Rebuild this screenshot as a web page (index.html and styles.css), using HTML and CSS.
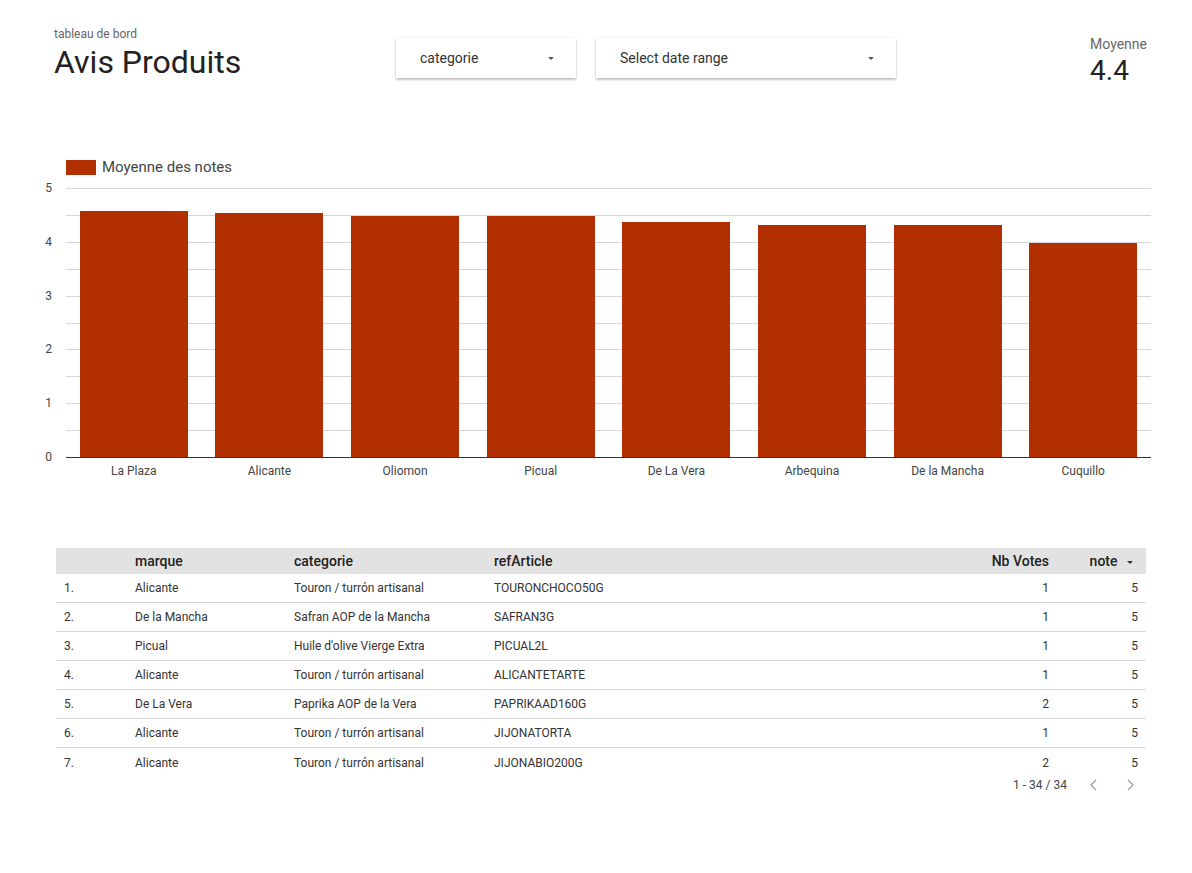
FILE: index.html
```html
<!DOCTYPE html>
<html lang="fr">
<head>
<meta charset="utf-8">
<title>Avis Produits</title>
<link rel="stylesheet" href="styles.css">
</head>
<body>
<div class="page">
  <header class="top">
    <div class="title-block">
      <div class="subtitle">tableau de bord</div>
      <h1 class="title">Avis Produits</h1>
    </div>
    <div class="dropdown dd-cat">
      <span>categorie</span>
      <span class="caret"></span>
    </div>
    <div class="dropdown dd-date">
      <span>Select date range</span>
      <span class="caret"></span>
    </div>
    <div class="scorecard">
      <div class="sc-label">Moyenne</div>
      <div class="sc-value">4.4</div>
    </div>
  </header>

  <section class="chart">
    <div class="legend">
      <span class="swatch"></span>
      <span>Moyenne des notes</span>
    </div>
    <div class="chart-body">
      <div class="yaxis">
        <span>5</span><span>4</span><span>3</span><span>2</span><span>1</span><span>0</span>
      </div>
      <div class="plot-col">
        <div class="plot">
          <div class="grid">
            <div></div><div></div><div></div><div></div><div></div>
            <div></div><div></div><div></div><div></div><div></div>
          </div>
          <div class="bars">
            <div class="slot"><div class="bar" style="height:91.4%"></div></div>
            <div class="slot"><div class="bar" style="height:90.7%"></div></div>
            <div class="slot"><div class="bar" style="height:89.6%"></div></div>
            <div class="slot"><div class="bar" style="height:89.6%"></div></div>
            <div class="slot"><div class="bar" style="height:87.4%"></div></div>
            <div class="slot"><div class="bar" style="height:86.2%"></div></div>
            <div class="slot"><div class="bar" style="height:86.2%"></div></div>
            <div class="slot"><div class="bar" style="height:79.6%"></div></div>
          </div>
        </div>
        <div class="xaxis">
          <span>La Plaza</span><span>Alicante</span><span>Oliomon</span><span>Picual</span>
          <span>De La Vera</span><span>Arbequina</span><span>De la Mancha</span><span>Cuquillo</span>
        </div>
      </div>
    </div>
  </section>

  <section class="table">
    <div class="row head">
      <div></div>
      <div>marque</div>
      <div>categorie</div>
      <div>refArticle</div>
      <div class="num">Nb Votes</div>
      <div class="num">note <span class="sort"></span></div>
    </div>
    <div class="row">
      <div>1.</div><div>Alicante</div><div>Touron / turrón artisanal</div><div>TOURONCHOCO50G</div><div class="num">1</div><div class="num">5</div>
    </div>
    <div class="row">
      <div>2.</div><div>De la Mancha</div><div>Safran AOP de la Mancha</div><div>SAFRAN3G</div><div class="num">1</div><div class="num">5</div>
    </div>
    <div class="row">
      <div>3.</div><div>Picual</div><div>Huile d'olive Vierge Extra</div><div>PICUAL2L</div><div class="num">1</div><div class="num">5</div>
    </div>
    <div class="row">
      <div>4.</div><div>Alicante</div><div>Touron / turrón artisanal</div><div>ALICANTETARTE</div><div class="num">1</div><div class="num">5</div>
    </div>
    <div class="row">
      <div>5.</div><div>De La Vera</div><div>Paprika AOP de la Vera</div><div>PAPRIKAAD160G</div><div class="num">2</div><div class="num">5</div>
    </div>
    <div class="row">
      <div>6.</div><div>Alicante</div><div>Touron / turrón artisanal</div><div>JIJONATORTA</div><div class="num">1</div><div class="num">5</div>
    </div>
    <div class="row last">
      <div>7.</div><div>Alicante</div><div>Touron / turrón artisanal</div><div>JIJONABIO200G</div><div class="num">2</div><div class="num">5</div>
    </div>
    <div class="pager">
      <span class="range">1 - 34 / 34</span>
      <svg class="chev" width="12" height="14" viewBox="0 0 12 14"><path d="M8 2 L3 7 L8 12" fill="none" stroke="#a0a0a0" stroke-width="1.4"/></svg>
      <svg class="chev" width="12" height="14" viewBox="0 0 12 14"><path d="M4 2 L9 7 L4 12" fill="none" stroke="#a0a0a0" stroke-width="1.4"/></svg>
    </div>
  </section>
</div>
</body>
</html>
```

FILE: styles.css
```css
* { box-sizing: border-box; }
html, body { margin: 0; padding: 0; background: #fff; }
body {
  font-family: Roboto, "Liberation Sans", Arial, sans-serif;
  color: #333;
  width: 1192px;
}
.page { width: 1192px; }

/* header */
.top {
  display: flex;
  align-items: flex-start;
  padding: 26px 45px 0 54px;
  height: 158px;
}
.title-block { width: 342px; }
.subtitle {
  font-size: 12px;
  line-height: 16px;
  color: #666;
}
.title {
  margin: 2px 0 0;
  font-size: 32px;
  font-weight: 400;
  line-height: 36px;
  color: #222;
}
.dropdown {
  margin-top: 12px;
  height: 40px;
  display: flex;
  align-items: center;
  justify-content: space-between;
  padding: 0 22px 0 24px;
  font-size: 14px;
  color: #333;
  background: #fff;
  box-shadow: 0 2px 2px rgba(0,0,0,0.22), 0 0 2px rgba(0,0,0,0.12);
}
.dd-cat { width: 180px; }
.dd-date { width: 300px; margin-left: 20px; }
.caret {
  width: 0; height: 0;
  border-left: 3px solid transparent;
  border-right: 3px solid transparent;
  border-top: 3px solid #555;
}
.scorecard { margin-left: auto; padding-top: 10px; }
.sc-label { font-size: 14px; line-height: 16px; color: #666; }
.sc-value { font-size: 28px; line-height: 30px; color: #222; margin-top: 4px; }

/* chart */
.chart { padding: 0 41px 0 40px; }
.legend {
  display: flex;
  align-items: center;
  gap: 6px;
  margin-left: 26px;
  font-size: 15px;
  color: #444;
  height: 18px;
}
.swatch { width: 30px; height: 15px; background: #b22f00; }
.chart-body { display: flex; margin-top: 12px; }
.yaxis {
  width: 26px;
  padding-right: 14px;
  height: 283px;
  margin-top: -7px;
  display: flex;
  flex-direction: column;
  justify-content: space-between;
  align-items: flex-end;
  font-size: 12px;
  line-height: 14px;
  color: #444;
}
.plot-col { flex: 1; }
.plot {
  display: grid;
  height: 270px;
}
.grid, .bars { grid-area: 1 / 1; }
.grid {
  display: flex;
  flex-direction: column;
  border-bottom: 1px solid #333;
}
.grid div { flex: 1; border-top: 1px solid #d6d6d6; }
.bars { display: flex; align-items: flex-end; padding-bottom: 1px; }
.slot {
  flex: 1;
  height: 100%;
  display: flex;
  align-items: flex-end;
  justify-content: center;
}
.bar { width: 108px; background: #b22f00; }
.xaxis { display: flex; margin-top: 6px; }
.xaxis span {
  flex: 1;
  text-align: center;
  font-size: 12px;
  line-height: 14px;
  color: #444;
}

/* table */
.table { margin: 70px 46px 0 56px; }
.row {
  display: grid;
  grid-template-columns: 79px 159px 200px 1fr 100px 89px;
  height: 29px;
  align-items: center;
  border-bottom: 1px solid #d8d8d8;
  font-size: 12px;
  color: #333;
}
.row > div:first-child { padding-left: 8px; }
.row .num { text-align: right; padding-right: 8px; }
.row.head {
  height: 26px;
  background: #e2e2e2;
  border-bottom: none;
  font-size: 14px;
  font-weight: 500;
  color: #222;
}
.row.last { border-bottom: none; }
.sort {
  display: inline-block;
  vertical-align: middle;
  margin-left: 6px;
  margin-right: 5px;
  width: 0; height: 0;
  border-left: 3px solid transparent;
  border-right: 3px solid transparent;
  border-top: 3px solid #333;
}
.pager {
  display: flex;
  justify-content: flex-end;
  align-items: center;
  height: 16px;
  margin-top: 0;
  padding-right: 10px;
  font-size: 12px;
  color: #444;
}
.range { margin-right: 21px; }
.chev + .chev { margin-left: 24px; }
```
